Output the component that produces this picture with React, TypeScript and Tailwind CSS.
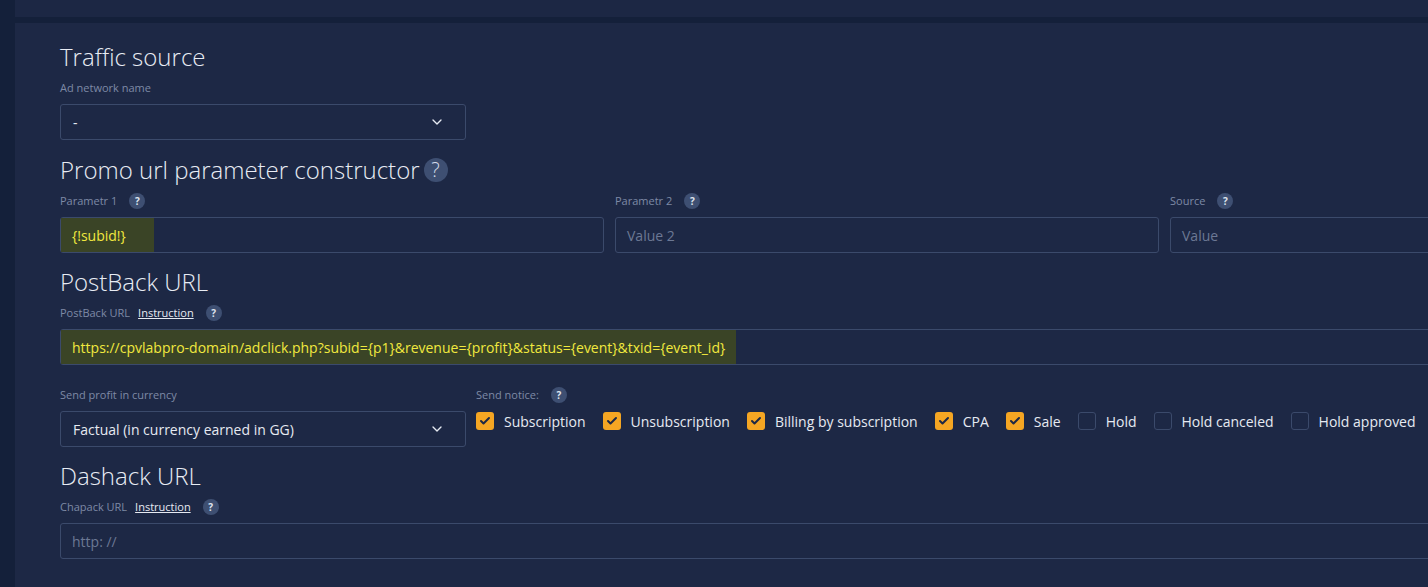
import React from 'react';
import { ChevronDown, Check } from 'lucide-react';

const Help: React.FC<{ big?: boolean }> = ({ big }) => (
  <span
    className={
      big
        ? 'inline-flex items-center justify-center w-6 h-6 rounded-full bg-[#3e4f72] text-[#d6dcea] text-[20px] leading-none'
        : 'inline-flex items-center justify-center w-4 h-4 rounded-full bg-[#3e4f72] text-[#dfe4ee] text-[10px] font-bold leading-none'
    }
  >
    ?
  </span>
);

const Label: React.FC<{ text: string; instr?: boolean; help?: boolean }> = ({ text, instr, help }) => (
  <div className="flex items-center gap-2 h-4 mb-2 text-[11px] text-[#7e8aa6]">
    <span>{text}</span>
    {instr && <span className="text-[#e6eaf2] underline">Instruction</span>}
    {help && <span className="ml-1"><Help /></span>}
  </div>
);

const Heading: React.FC<{ children: React.ReactNode }> = ({ children }) => (
  <h2 className="text-[24px] font-light text-[#e8ecf4] leading-[30px] mb-2 flex items-center gap-1">{children}</h2>
);

const box = 'h-9 border border-[#3b4a6b] rounded-[3px] flex items-center text-[14px]';

const notices: [string, boolean][] = [
  ['Subscription', true],
  ['Unsubscription', true],
  ['Billing by subscription', true],
  ['CPA', true],
  ['Sale', true],
  ['Hold', false],
  ['Hold canceled', false],
  ['Hold approved', false],
];

const App: React.FC = () => (
  <div
    className="w-[1428px] h-[587px] overflow-hidden bg-[#14203a] pl-[15px]"
    style={{ fontFamily: '"Open Sans", "Noto Sans", sans-serif' }}
  >
    <div className="h-[17px] bg-[#1c2744]" />
    <div className="mt-[6px] h-[600px] bg-[#1d2845] pl-[45px] pt-[19px] w-[1700px]">
      <Heading>Traffic source</Heading>
      <Label text="Ad network name" />
      <div className={`${box} w-[406px] justify-between px-3 text-[#e6eaf2]`}>
        <span>-</span>
        <ChevronDown className="w-4 h-4 mr-2" />
      </div>

      <div className="mt-[15px]">
        <Heading>Promo url parameter constructor <Help big /></Heading>
      </div>
      <div className="grid grid-cols-[544px_544px_544px] gap-[11px]">
        {[['Parametr 1', ''], ['Parametr 2', 'Value 2'], ['Source', 'Value']].map(([l, v]) => (
          <div key={l}>
            <Label text={l} help />
            <div className={box}>
              {v ? (
                <span className="px-[11px] text-[#6c7894]">{v}</span>
              ) : (
                <span className="h-full w-[93px] pl-[11px] flex items-center bg-[#3a4426] text-[#f1e93e]">{'{!subid!}'}</span>
              )}
            </div>
          </div>
        ))}
      </div>

      <div className="mt-[14px]">
        <Heading>PostBack URL</Heading>
      </div>
      <Label text="PostBack URL" instr help />
      <div className={box}>
        <span className="h-full px-[11px] flex items-center bg-[#3a4426] text-[#f1e93e]">
          https://cpvlabpro-domain/adclick.php?subid={'{p1}'}&revenue={'{profit}'}&status={'{event}'}&txid={'{event_id}'}
        </span>
      </div>

      <div className="flex gap-[10px] mt-[22px]">
        <div className="w-[406px]">
          <Label text="Send profit in currency" />
          <div className={`${box} justify-between px-3 text-[#e6eaf2]`}>
            <span>Factual (in currency earned in GG)</span>
            <ChevronDown className="w-4 h-4 mr-2" />
          </div>
        </div>
        <div>
          <Label text="Send notice:" help />
          <div className="flex items-center h-5 gap-[17px]">
            {notices.map(([n, c]) => (
              <div key={n} className="flex items-center gap-[10px] text-[14px] text-[#e6eaf2]">
                {c ? (
                  <span className="w-[18px] h-[18px] rounded-[3px] bg-[#f5a623] flex items-center justify-center">
                    <Check className="w-3 h-3 text-[#1d2845]" strokeWidth={4} />
                  </span>
                ) : (
                  <span className="w-[18px] h-[18px] rounded-[3px] border border-[#3b4a6b]" />
                )}
                {n}
              </div>
            ))}
          </div>
        </div>
      </div>

      <div className="mt-[14px]">
        <Heading>Dashack URL</Heading>
      </div>
      <Label text="Chapack URL" instr help />
      <div className={`${box} px-[11px] text-[#6c7894]`}>http: //</div>
    </div>
  </div>
);

export default App;
